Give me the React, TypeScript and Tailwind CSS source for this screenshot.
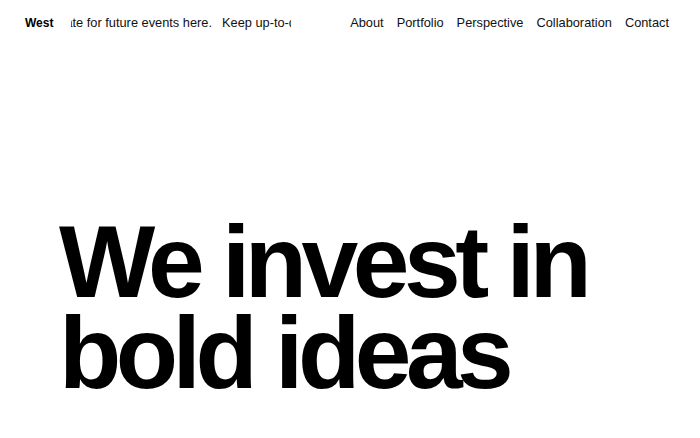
const links = ['About', 'Portfolio', 'Perspective', 'Collaboration', 'Contact'];

export default function App() {
  return (
    <div className="min-h-[438px] bg-white text-[#111] font-['Liberation_Sans',Arial,sans-serif]">
      <header className="flex h-[46px] items-center pl-[25px] pr-[31px]">
        <span className="text-[12px] font-bold text-black">West</span>
        <div className="ml-[18px] w-[220px] overflow-hidden">
          <div className="ml-[-80px] flex gap-[10px] whitespace-nowrap text-[12.8px]">
            <span>Keep up-to-date for future events here.</span>
            <span>Keep up-to-date for future events here.</span>
          </div>
        </div>
        <nav className="ml-auto flex gap-[13px] text-[12.8px]">
          {links.map((l) => (
            <a key={l} href="#">
              {l}
            </a>
          ))}
        </nav>
      </header>

      <main className="pl-[59px] pt-[171px]">
        <h1 className="text-[102px] font-bold leading-[91px] tracking-[-0.054em] text-black">
          We invest in
          <br />
          bold ideas
        </h1>
      </main>
    </div>
  );
}
